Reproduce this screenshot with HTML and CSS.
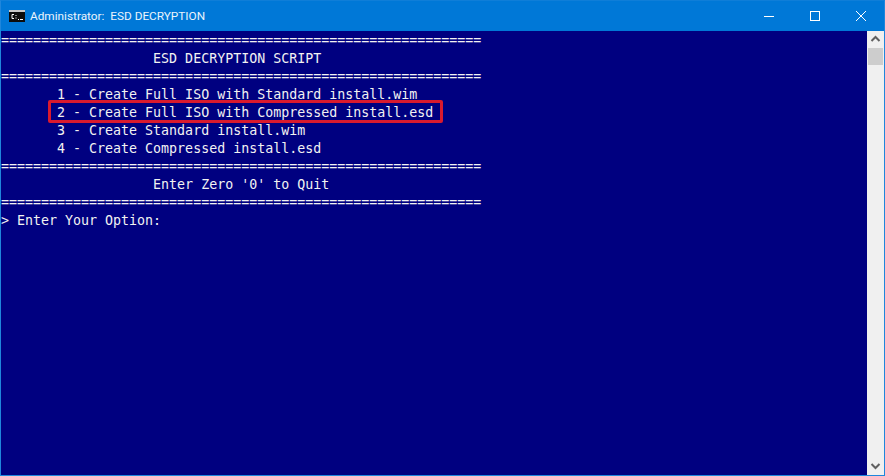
FILE: index.html
```html
<!DOCTYPE html>
<html lang="en">
<head>
<meta charset="utf-8">
<title>ESD DECRYPTION</title>
<link rel="stylesheet" href="styles.css">
</head>
<body>
<div class="window">
  <header class="titlebar">
    <svg class="app-icon" width="16" height="12" viewBox="0 0 16 12">
      <rect x="0" y="0" width="16" height="12" fill="#0c0c0c"/>
      <rect x="0" y="0" width="16" height="2" fill="#c8c8c8"/>
      <path d="M5 4.5H3v4h2M7 5v1M7 7.5v1M9 9.5h1M11 9.5h3" fill="none" stroke="#fff" stroke-width="1"/>
    </svg>
    <span class="title">Administrator:&nbsp; ESD DECRYPTION</span>
    <div class="controls">
      <button class="ctl"><svg width="10" height="10" viewBox="0 0 10 10"><path d="M0 5.5H10" stroke="#fff" fill="none"/></svg></button>
      <button class="ctl"><svg width="10" height="10" viewBox="0 0 10 10"><rect x="0.5" y="0.5" width="9" height="9" stroke="#fff" fill="none"/></svg></button>
      <button class="ctl"><svg width="10" height="10" viewBox="0 0 10 10"><path d="M0 0L10 10M10 0L0 10" stroke="#fff" fill="none"/></svg></button>
    </div>
  </header>
  <div class="body">
    <main class="console">
<pre class="output">============================================================
                   ESD DECRYPTION SCRIPT
============================================================
       1 - Create Full ISO with Standard install.wim
       2 - Create Full ISO with Compressed install.esd
       3 - Create Standard install.wim
       4 - Create Compressed install.esd
============================================================
                   Enter Zero '0' to Quit
============================================================
&gt; Enter Your Option:</pre>
      <div class="highlight"></div>
    </main>
    <aside class="scrollbar">
      <svg class="arrow" width="17" height="17" viewBox="0 0 17 17"><path d="M4.5 10L8.5 6L12.5 10" stroke="#606060" stroke-width="2" fill="none"/></svg>
      <div class="thumb"></div>
      <div class="track"></div>
      <svg class="arrow" width="17" height="17" viewBox="0 0 17 17"><path d="M4.5 6L8.5 10L12.5 6" stroke="#606060" stroke-width="2" fill="none"/></svg>
    </aside>
  </div>
</div>
</body>
</html>
```

FILE: styles.css
```css
html, body {
  margin: 0;
  padding: 0;
  height: 100%;
  overflow: hidden;
}
.window {
  display: flex;
  flex-direction: column;
  width: 885px;
  height: 476px;
  box-sizing: border-box;
  border: 1px solid #1f86dc;
  border-top-color: #0f7ed8;
  background: #0078d7;
}
.titlebar {
  display: flex;
  align-items: center;
  height: 30px;
  flex: none;
  padding-left: 8px;
  color: #fff;
  font-family: Roboto, "Liberation Sans", sans-serif;
  font-size: 11.8px;
}
.app-icon {
  flex: none;
  margin-right: 5px;
}
.title {
  flex: 1;
  color: #eaf4fc;
}
.controls {
  display: flex;
}
.ctl {
  width: 46px;
  height: 30px;
  padding: 0;
  border: 0;
  background: transparent;
  display: flex;
  align-items: center;
  justify-content: center;
}
.body {
  flex: 1;
  display: flex;
  min-height: 0;
}
.console {
  position: relative;
  flex: 1;
  padding-top: 1px;
  background: #000080;
}
.output {
  margin: 0;
  color: #f2f2f2;
  font-family: "DejaVu Sans Mono", monospace;
  font-size: 13.3px;
  line-height: 18px;
  white-space: pre;
}
.highlight {
  position: absolute;
  left: 47px;
  top: 69px;
  width: 395px;
  height: 23px;
  box-sizing: border-box;
  border: 3px solid #d91a2e;
  border-radius: 2px;
}
.scrollbar {
  width: 17px;
  flex: none;
  display: flex;
  flex-direction: column;
  background: #f0f0f0;
}
.arrow {
  flex: none;
  display: block;
}
.thumb {
  flex: none;
  height: 17px;
  margin: 0 1px;
  background: #cdcdcd;
}
.track {
  flex: 1;
}
```
